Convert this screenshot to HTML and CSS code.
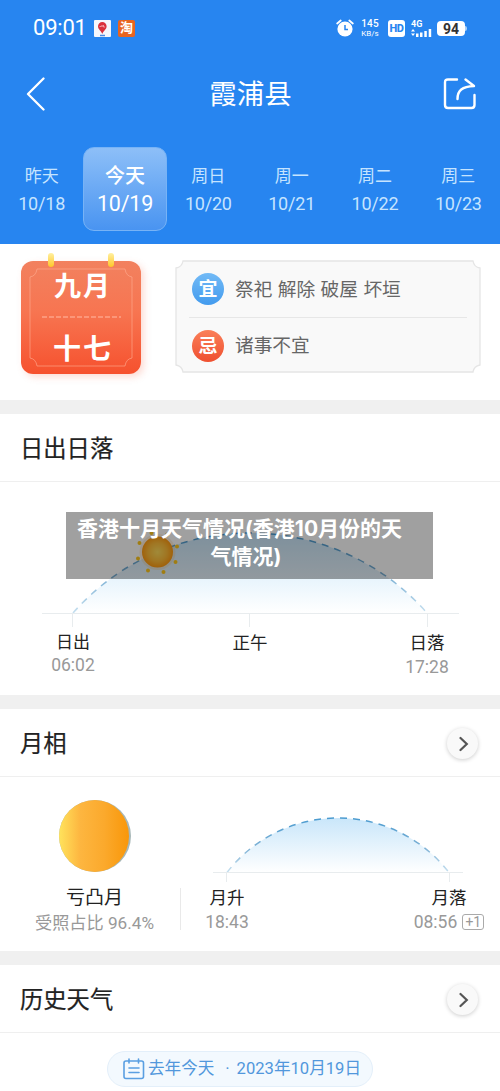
FILE: index.html
```html
<!DOCTYPE html>
<html lang="zh-CN">
<head>
<meta charset="utf-8">
<title>霞浦县</title>
<link rel="stylesheet" href="styles.css">
</head>
<body>
<header class="top">
  <div class="status">
    <span class="clock">09:01</span>
    <svg class="app" width="17" height="17" viewBox="0 0 17 17"><rect width="17" height="17" rx="1" fill="#f5f7fc"/><path d="M8.300 14C7.400 11 4 9.500 4 6.300a4.300 4.300 0 0 1 8.600 0C12.600 9.500 9.200 11 8.300 14z" fill="#d9303c"/><path d="M5.500 6.500h1.800v-1M8.200 5v2M9.500 5v2h1.600" stroke="#f6b4b8" stroke-width=".8" fill="none"/><path d="M6 15.500h5" stroke="#4c8be0" stroke-width="1.500"/></svg>
    <span class="tao">淘</span>
    <svg class="alarm" width="18" height="18" viewBox="0 0 18 18"><circle cx="9" cy="10" r="7.600" fill="#fff"/><path d="M1.200 4.500 4.700 1.500M16.800 4.500 13.300 1.500" stroke="#fff" stroke-width="1.800" stroke-linecap="round"/><path d="M9 6v4.600h3" stroke="#2785f0" stroke-width="1.500" fill="none"/></svg>
    <span class="speed"><b>145</b><span>KB/s</span></span>
    <span class="hd">HD</span>
    <span class="signal"><b>4G</b><svg width="21" height="9" viewBox="0 0 21 9" fill="#fff"><path d="M0 3.500 2 1l2 2.500zM0 5.500 2 8l2-2.500zM5 5.500h2.500V9H5zM9 4.500h2.500V9H9zM13.300 3h2.500v6h-2.500zM17.700 1h2.500v8h-2.500z"/></svg></span>
    <span class="battery">94</span><i class="nub"></i>
  </div>
  <div class="titlebar">
    <svg width="20" height="34" viewBox="0 0 20 34"><path d="M17.500 1.500 2 17l15.500 15.500" fill="none" stroke="#fff" stroke-width="2.300" stroke-linecap="round" stroke-linejoin="round"/></svg>
    <h1>霞浦县</h1>
    <svg width="34" height="34" viewBox="0 0 34 34" fill="none" stroke="#fff" stroke-width="2.400" stroke-linecap="round" stroke-linejoin="round"><path d="M14 2.500H5Q2 2.500 2 5.500V28Q2 31 5 31H28.500Q31.500 31 31.500 28V18"/><path d="M14.500 22C14.500 13.500 19 9.500 31 9L22.500 2.500"/></svg>
  </div>
  <nav class="days">
    <div class="day"><span>昨天</span><time>10/18</time></div>
    <div class="day today"><span>今天</span><time>10/19</time></div>
    <div class="day"><span>周日</span><time>10/20</time></div>
    <div class="day"><span>周一</span><time>10/21</time></div>
    <div class="day"><span>周二</span><time>10/22</time></div>
    <div class="day"><span>周三</span><time>10/23</time></div>
  </nav>
</header>
<main>
  <section class="almanac">
    <div class="calendar">
      <svg class="frame" width="120" height="121" viewBox="0 -8 120 121" fill="none"><path d="M16 8H104Q105 15 111 16V97Q105 98 104 105H16Q15 98 9 97V16Q15 15 16 8z" stroke="#ffae92" stroke-opacity=".6"/><path d="M21 56H100" stroke="#ffb29b" stroke-opacity=".75" stroke-width="1.300" stroke-dasharray="5 2"/><rect x="27" y="-8" width="6" height="14" rx="3" fill="url(#ring)"/><rect x="87" y="-8" width="6" height="14" rx="3" fill="url(#ring)"/><defs><linearGradient id="ring" x2="0" y2="1"><stop stop-color="#fff0a0"/><stop offset="1" stop-color="#ffc629"/></linearGradient></defs></svg>
      <span>九月</span><span class="date">十七</span>
    </div>
    <div class="advice">
      <svg class="frame" width="306" height="113" viewBox="0 0 306 113"><path d="M8 1H298Q299 7 305 8V105Q299 106 298 112H8Q7 106 1 105V8Q7 7 8 1z" fill="#f9f9f9" stroke="#e5e5e5" stroke-width="1.300"/></svg>
      <div class="row"><b class="seal good">宜</b><span>祭祀 解除 破屋 坏垣</span></div>
      <div class="row"><b class="seal bad">忌</b><span>诸事不宜</span></div>
    </div>
  </section>

  <section class="card sun">
    <h2>日出日落</h2>
    <svg class="chart" width="500" height="147" viewBox="0 482 500 147" fill="none">
      <defs>
        <linearGradient id="sky" x2="0" y2="1"><stop stop-color="#c9e6fa"/><stop offset="1" stop-color="#fff"/></linearGradient>
        <linearGradient id="line" x2="0" y2="1"><stop stop-color="#4b9bd0"/><stop offset=".55" stop-color="#7fb2d5"/><stop offset="1" stop-color="#c5dfef"/></linearGradient>
        <radialGradient id="sun"><stop stop-color="#ffdc5c"/><stop offset=".6" stop-color="#ffbc38"/><stop offset="1" stop-color="#ff9b12"/></radialGradient>
      </defs>
      <path d="M73 613A235.800 235.800 0 0 1 427 613z" fill="url(#sky)"/>
      <path d="M73 613A235.800 235.800 0 0 1 427 613" stroke="url(#line)" stroke-width="1.500" stroke-dasharray="7 6"/>
      <path d="M42 613.500H459M72.500 613v14M249.500 613v14M427.500 613v14" stroke="#e8ecee"/>
      <g fill="#ffc71e"><circle cx="157.500" cy="552" r="18" fill="#ffb54a" fill-opacity=".2"/><circle cx="157.500" cy="552" r="15.500" fill="url(#sun)"/><circle cx="139.500" cy="543" r="2"/><circle cx="138" cy="558.500" r="2"/><circle cx="148" cy="570.500" r="2"/><circle cx="163.500" cy="572" r="2"/><circle cx="175.500" cy="562" r="2"/><circle cx="177" cy="546.500" r="2"/><circle cx="167" cy="534.500" r="2"/><circle cx="151.500" cy="533" r="2"/></g>
    </svg>
    <div class="labels"><div><span>日出</span><time>06:02</time></div><div class="low"><span>正午</span></div><div class="low"><span>日落</span><time>17:28</time></div></div>
    <p class="banner">香港十月天气情况(香港10月份的天<br><span>气情况)</span></p>
  </section>

  <section class="card moon">
    <h2>月相<i class="more"><svg width="10" height="16" viewBox="0 0 10 16"><path d="m1.500 2 6.300 6-6.300 6" fill="none" stroke="#555" stroke-width="2.200" stroke-linecap="round"/></svg></i></h2>
    <div class="moonbody">
      <div class="phase">
        <svg width="80" height="80" viewBox="54 795 80 80"><defs><linearGradient id="moon"><stop stop-color="#ffe35c"/><stop offset=".3" stop-color="#fdb640"/><stop offset=".65" stop-color="#fba92c"/><stop offset="1" stop-color="#f99709"/></linearGradient></defs><circle cx="94" cy="836" r="36" fill="#a7b7b7"/><path d="M94 800A36 36 0 0 0 94 872A34 36 0 0 0 94 800z" fill="url(#moon)"/></svg>
        <span>亏凸月</span><small>受照占比 96.4%</small>
      </div>
      <div class="orbit">
        <svg width="311" height="105" viewBox="189 777 311 105" fill="none"><path d="M227 872.500A140.300 140.300 0 0 1 449 872.500z" fill="url(#sky)"/><path d="M227 872.500A140.300 140.300 0 0 1 449 872.500" stroke="url(#line)" stroke-width="1.500" stroke-dasharray="7 6"/><path d="M213 872.500H463M226.500 872v10M449.500 872v10" stroke="#e8ecee"/></svg>
        <div class="rise"><div><span>月升</span><time>18:43</time></div><div><span>月落</span><time>08:56<em>+1</em></time></div></div>
      </div>
    </div>
  </section>

  <section class="card history">
    <h2>历史天气<i class="more"><svg width="10" height="16" viewBox="0 0 10 16"><path d="m1.500 2 6.300 6-6.300 6" fill="none" stroke="#555" stroke-width="2.200" stroke-linecap="round"/></svg></i></h2>
    <div class="pill"><svg width="22" height="22" viewBox="0 0 22 22" fill="none" stroke="#5a9fe2" stroke-width="1.600" stroke-linecap="round"><rect x="1" y="3" width="19.500" height="17.500" rx="2"/><path d="M6 1v4M15.500 1v4M6 10h10M6 14.500h10"/></svg><span class="last">去年今天</span><span class="dot">·</span><span class="full">2023年10月19日</span></div>
  </section>
</main>
</body>
</html>
```
FILE: styles.css
```css
* { box-sizing: border-box; }
body { margin: 0; width: 500px; height: 1091px; overflow: hidden; background: #fff; color: #222; font-family: Roboto, "Noto Sans CJK SC", sans-serif; }
h1, h2, p { margin: 0; font-weight: 400; }
svg { display: block; flex: none; }
i, em { font-style: normal; }

.top { height: 244px; background: #2785f0; color: #fff; }
.status { height: 56px; padding: 0 33px 0 33px; display: flex; align-items: center; }
.clock { width: 61px; font-size: 22px; line-height: 28px; letter-spacing: -.2px; }
.tao { width: 17px; height: 17px; margin-left: 7px; border-radius: 2px; background: #e86420; font-size: 13px; line-height: 16px; font-weight: 700; text-align: center; }
.alarm { margin-left: auto; }
.speed { width: 22px; height: 19px; margin-left: 5px; display: flex; flex-direction: column; align-items: center; justify-content: space-between; font-size: 8px; line-height: 9px; }
.speed b { font-size: 10px; line-height: 10px; font-weight: 500; letter-spacing: .2px; }
.hd { width: 17px; height: 17px; margin-left: 7px; border-radius: 3px; background: #fff; color: #2785f0; font-size: 11px; line-height: 17px; font-weight: 800; text-align: center; letter-spacing: -.5px; }
.signal { width: 21px; height: 17px; margin-left: 6px; }
.signal b { display: block; font-size: 9px; line-height: 8px; font-weight: 700; }
.battery { width: 28px; height: 15px; margin-left: 5px; border-radius: 4px; background: #fff; color: #333; font-size: 14px; line-height: 16px; font-weight: 700; text-align: center; }
.nub { width: 2px; height: 5px; background: #a9cff8; border-radius: 0 2px 2px 0; }
.titlebar { height: 75px; padding: 0 23px 0 26px; display: flex; align-items: center; justify-content: space-between; }
h1 { font-size: 27.500px; line-height: 40px; padding: 2px 0 0 12px; }
.days { margin-top: 16px; display: grid; grid-template-columns: repeat(6, 1fr); }
.day { height: 84px; display: flex; flex-direction: column; align-items: center; padding-top: 16px; color: #c6e4ff; font-size: 17px; line-height: 26px; }
.day time { margin-top: 2px; font-size: 18px; letter-spacing: -.2px; }
.today { color: #fff; font-size: 20px; font-weight: 500; border-radius: 11px; border: 1px solid #77b3f6; background: linear-gradient(#8dbff8, #4994f1); padding-top: 15px; }
.today time { font-size: 21.500px; font-weight: 400; letter-spacing: -.2px; }

.almanac { height: 156px; padding: 17px 19px 0 21px; display: flex; justify-content: space-between; }
.calendar { position: relative; width: 120px; height: 113px; padding: 6px 0 0 4px; border-radius: 12px; background: linear-gradient(#f2815f, #f77551 45%, #f6512e); box-shadow: 3px 3px 7px #f8745640; display: flex; flex-direction: column; align-items: center; color: #fff; font-size: 27px; font-weight: 700; line-height: 40px; letter-spacing: 2px; }
.calendar .frame { position: absolute; left: 0; top: -8px; }
.date { margin-top: 23px; font-size: 28px; }
.advice { position: relative; width: 306px; height: 113px; padding: 0 14px; }
.advice .frame { position: absolute; left: 0; top: -1px; }
.row { position: relative; height: 56px; padding-left: 3px; display: flex; align-items: center; gap: 11px; color: #666; font-size: 18.700px; line-height: 28px; white-space: nowrap; word-spacing: .8px; }
.row span { padding-top: 2px; }
.row + .row { border-top: 1px solid #e7e7e7; }
.row + .row span { padding-top: 1px; }
.seal { width: 32px; height: 32px; border-radius: 50%; color: #fff; font-size: 19px; line-height: 33px; text-align: center; }
.good { background: linear-gradient(#72baf6, #439bee); }
.bad { background: linear-gradient(#fa7f59, #ef5030); }

.card { position: relative; border-top: 14px solid #f0f0f0; }
h2 { height: 68px; padding: 3px 20px 0; border-bottom: 1px solid #efefef; display: flex; align-items: center; justify-content: space-between; font-size: 23.300px; line-height: 36px; font-weight: 400; -webkit-text-stroke: .2px #222; }
.more { width: 31px; height: 31px; margin: -1px 2px 0 0; border-radius: 50%; background: #f9f9f9; box-shadow: 0 1px 4px #0003; display: flex; align-items: center; justify-content: center; padding-left: 3px; }
.sun { height: 295px; }
.labels { padding: 1px 23px 0; display: flex; justify-content: space-between; }
.labels > div, .rise > div { width: 100px; display: flex; flex-direction: column; align-items: center; font-size: 17.500px; line-height: 24px; }
.labels > .low { padding-top: 1px; }
.labels div:first-child { font-size: 17px; }
.labels time, .rise time { color: #999; font-size: 17.500px; line-height: 24px; }
.labels div:first-child time { margin-top: -1px; }
.banner { position: absolute; left: 66px; top: 98px; width: 367px; height: 67px; padding: 3px 20px 0 0; background: #0000005f; color: #fff; font-family: Inter, "Noto Sans CJK SC", sans-serif; font-size: 21px; line-height: 28px; font-weight: 700; text-align: center; white-space: nowrap; }
.banner span { padding-left: 13px; }
.moon { height: 256px; }
.moonbody { display: flex; }
.phase { width: 189px; padding-top: 18px; display: flex; flex-direction: column; align-items: center; font-size: 19px; line-height: 26px; background: linear-gradient(#e9e9e9, #e9e9e9) 180px 111px / 1px 42px no-repeat; }
.phase span { margin-top: 10px; }
.phase small { color: #999; font-size: 17.200px; line-height: 24px; }
.orbit { width: 311px; }
.rise { margin-top: 3px; padding: 1px 1px 0 0; display: flex; justify-content: space-between; }
.rise > div:first-child { width: 76px; }
.rise time { display: flex; align-items: center; white-space: nowrap; }
.rise em { width: 22px; height: 16px; margin-left: 5px; border: 1px solid #aaa; border-radius: 3px; font-size: 14px; line-height: 14px; text-align: center; }
.history { height: 140px; }
.pill { width: 266px; height: 36px; margin: 18px 0 0 107px; padding: 0 11px 0 15px; display: flex; align-items: center; border: 1px solid #e3effa; border-radius: 18px; background: #f3f9fe; color: #5197dc; font-size: 16.600px; line-height: 24px; white-space: nowrap; }
.last { margin-left: 3px; }
.dot { margin: 0 auto; padding-left: 4px; }
```
